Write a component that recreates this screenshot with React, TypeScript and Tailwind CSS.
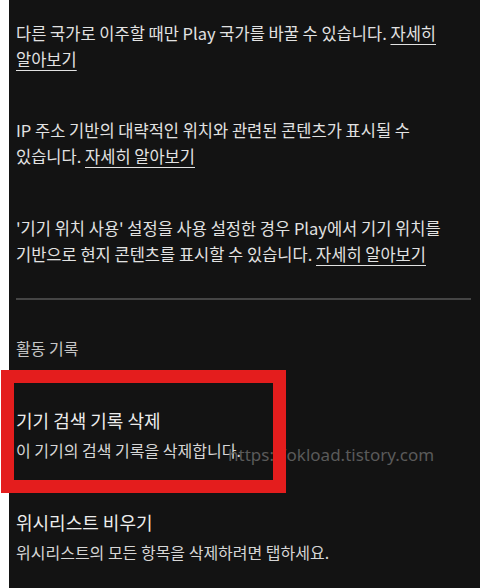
export default function App() {
  const link = "underline underline-offset-[4px] decoration-1";
  return (
    <div
      className="relative flex w-[480px] h-[588px] overflow-hidden bg-white"
      style={{ fontFamily: '"Noto Sans CJK KR", "Noto Sans", sans-serif' }}
    >
      <div className="w-[9px] shrink-0 bg-white" />
      <div className="flex-1 bg-[#131313] pl-[7px] pr-[9px] pt-[20px] text-[16px] leading-[26px] text-[#e2e2e2] whitespace-nowrap">
        <div className="text-[16.5px]">
          <p>
            다른 국가로 이주할 때만 Play 국가를 바꿀 수 있습니다. <span className={link}>자세히</span>
            <br />
            <span className={link}>알아보기</span>
          </p>
          <p className="mt-[45px]">
            IP 주소 기반의 대략적인 위치와 관련된 콘텐츠가 표시될 수
            <br />
            있습니다. <span className={link}>자세히 알아보기</span>
          </p>
          <p className="mt-[46px]">
            '기기 위치 사용' 설정을 사용 설정한 경우 Play에서 기기 위치를
            <br />
            기반으로 현지 콘텐츠를 표시할 수 있습니다. <span className={link}>자세히 알아보기</span>
          </p>
        </div>
        <div className="mt-[31px] h-[2px] bg-[#454545]" />
        <p className="mt-[35px] text-[#c6c6c6]">활동 기록</p>
        <p className="mt-[46px] text-[18px] text-[#ececec]">기기 검색 기록 삭제</p>
        <p className="mt-[4px] text-[#d6d6d6]">이 기기의 검색 기록을 삭제합니다.</p>
        <p className="mt-[46px] text-[18px] text-[#ececec]">위시리스트 비우기</p>
        <p className="mt-[4px] text-[#d6d6d6]">위시리스트의 모든 항목을 삭제하려면 탭하세요.</p>
      </div>
      <span
        className="absolute left-[228px] top-[442px] text-[17px] leading-[26px] text-[#5a5a5a]"
        style={{ fontFamily: '"Noto Sans", sans-serif' }}
      >
        https://okload.tistory.com
      </span>
      <div className="absolute left-[1px] top-[370px] w-[285px] h-[123px] border-[13px] border-[#e41d1d]" />
    </div>
  );
}
